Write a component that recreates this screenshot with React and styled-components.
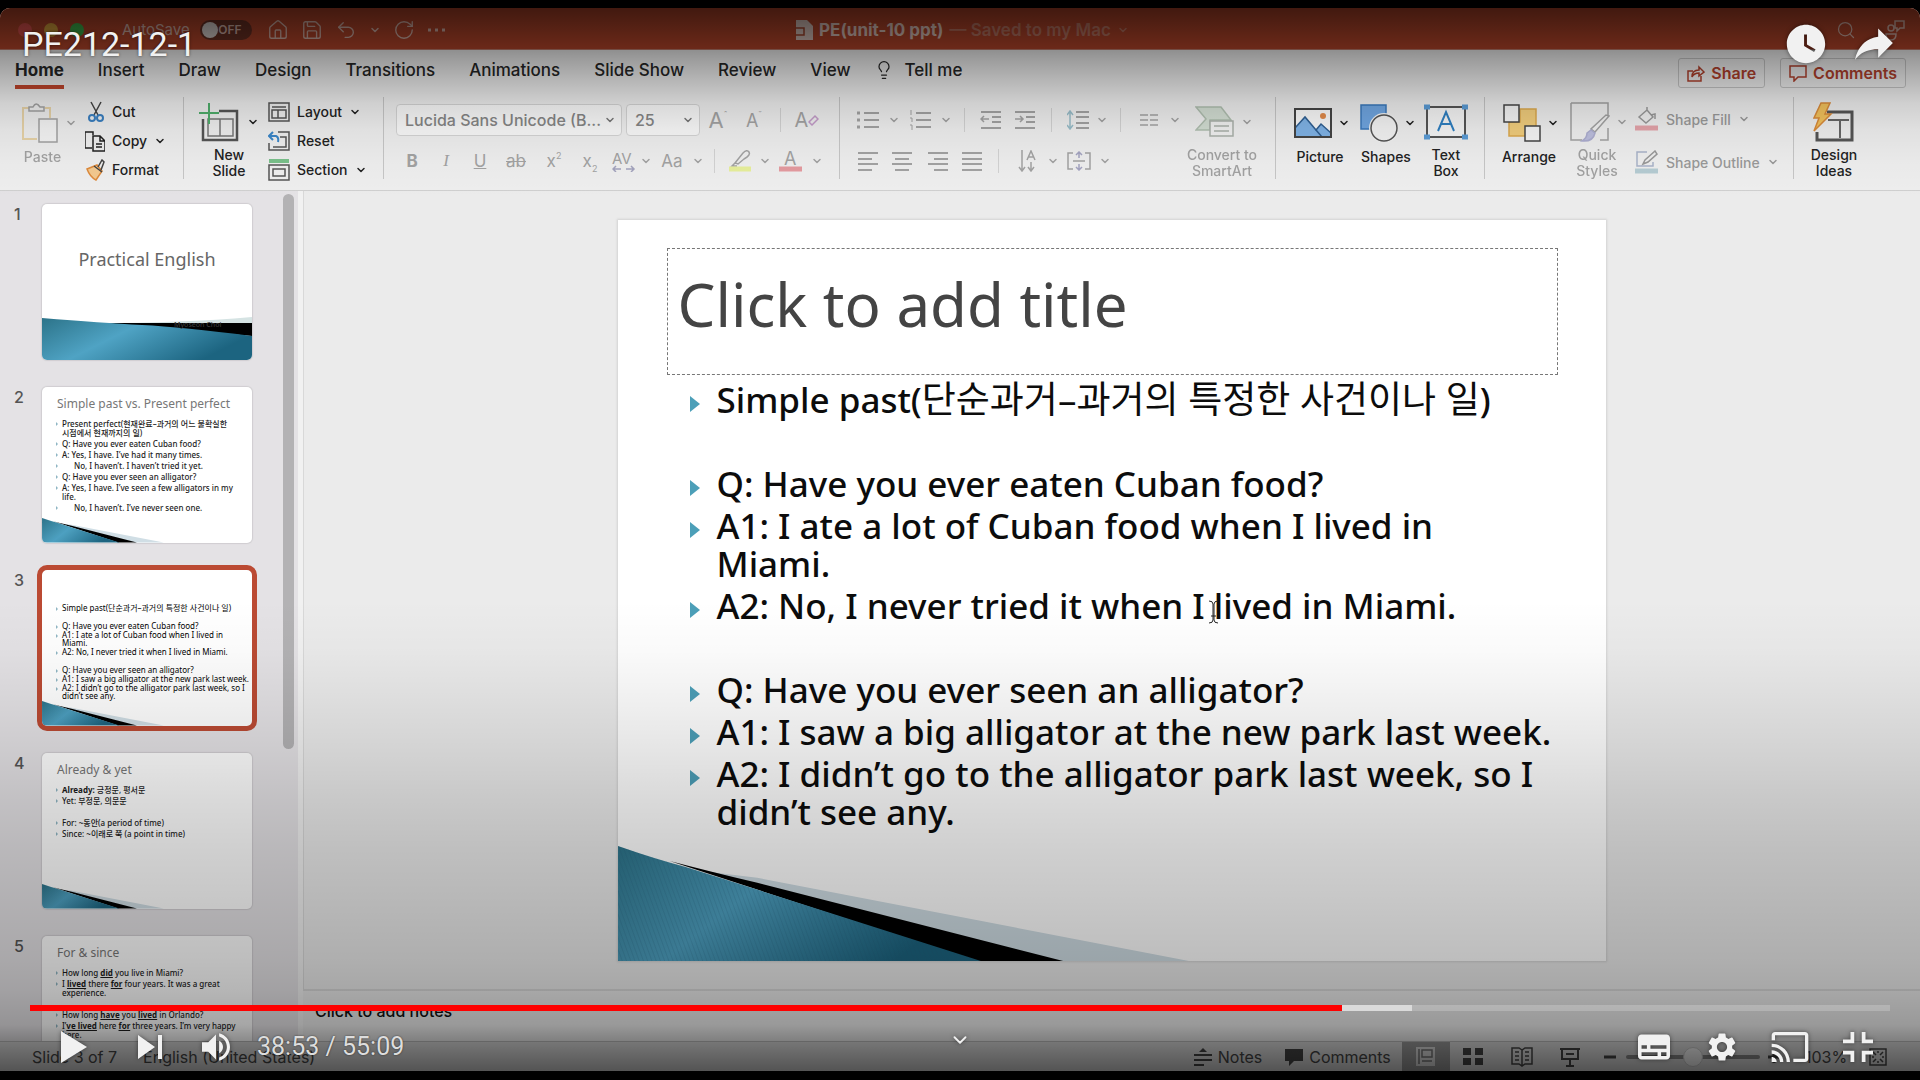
import React, { useState } from "react";
import styled, { createGlobalStyle, css } from "styled-components";
import { ChevronDown, House, Save, Undo2, RotateCw, Search, Lightbulb } from "lucide-react";
import { MdSettings, MdCast, MdWatchLater } from "react-icons/md";

const UI = `Inter, "Liberation Sans", sans-serif`;
const SLIDE = `"Noto Sans", "Noto Sans CJK KR", sans-serif`;

const Global = createGlobalStyle`
  * { box-sizing: border-box; }
  body { margin: 0; background: #000; font-family: ${UI}; overflow: hidden; }
  button, select, input { font: inherit; color: inherit; margin: 0; }
  button { background: none; border: 0; padding: 0; cursor: pointer; }
  p, h1, h2, ul, ol { margin: 0; padding: 0; font-weight: 400; list-style: none; }
  svg { display: block; flex: none; }
`;

/* ---------- frame ---------- */
const Player = styled.div`
  height: 100vh;
  padding: 8px 0 9px;
  background: #000;
  display: grid;
`;
const Video = styled.div`
  position: relative;
  min-height: 0;
  display: grid;
  background: #555;
  border-radius: 10px 10px 0 0;
  overflow: hidden;
`;
const Win = styled.div`
  min-height: 0;
  display: grid;
  grid-template-rows: 42px 141px minmax(0, 1fr) 30px;
  background: #ededed;
`;

/* ---------- title bar ---------- */
const TitleBar = styled.header`
  display: grid;
  grid-template-columns: 1fr auto 1fr;
  align-items: center;
  background: #b5452a;
  color: #d9b4aa;
  font-size: 15px;
  line-height: 20px;
  padding: 2px 14px 0 18px;
  border-bottom: 1px solid #c08070;
`;
const BarSide = styled.div`
  display: flex;
  align-items: center;
  justify-content: ${(p) => (p.$end ? "flex-end" : "flex-start")};
  gap: ${(p) => (p.$end ? 28 : 12)}px;
`;
const Light = styled.span`
  width: 14px;
  height: 14px;
  border-radius: 50%;
  background: ${(p) => p.$c};
`;
const SwitchLabel = styled.label`
  display: flex;
  align-items: center;
  gap: 10px;
  margin: 0 3px 0 26px;
`;
const Switch = styled.span`
  position: relative;
  width: 52px;
  height: 20px;
  border-radius: 10px;
  background: #6b3023;
  display: flex;
  align-items: center;
  justify-content: space-between;
  padding: 0 10px 0 2px;
  font-size: 12px;
  font-weight: 600;
  input { position: absolute; inset: 0; opacity: 0; }
  i { width: 16px; height: 16px; border-radius: 50%; background: #ded5d2; }
`;
const DocTitle = styled.div`
  display: flex;
  align-items: center;
  gap: 6px;
  font-size: 17px;
  font-weight: 600;
  color: #c07865;
  strong { font-weight: 700; color: #e3c8c0; }
`;

/* ---------- ribbon ---------- */
const Ribbon = styled.div`
  display: grid;
  grid-template-rows: 43px 1fr;
  background: #eeeeee;
  border-bottom: 1px solid #cfcfcf;
`;
const TabBar = styled.div`
  display: flex;
  align-items: center;
  padding: 0 14px 4px 15px;
  gap: 24px;
`;
const Tabs = styled.nav`
  display: flex;
  gap: 34px;
`;
const Tab = styled.button`
  height: 39px;
  font-size: 17px;
  line-height: 20px;
  font-weight: ${(p) => (p.$on ? 700 : 500)};
  color: #262626;
  border-top: 4px solid transparent;
  border-bottom: 4px solid ${(p) => (p.$on ? "#c0452c" : "transparent")};
  display: flex;
  align-items: center;
  gap: 10px;
`;
const TabActions = styled.div`
  margin-left: auto;
  display: flex;
  gap: 15px;
`;
const Action = styled.button`
  height: 30px;
  margin-top: 7px;
  padding: 0 8px;
  display: flex;
  align-items: center;
  gap: 6px;
  border: 1px solid #c4c4c4;
  border-radius: 3px;
  font-size: 16px;
  font-weight: 600;
  color: #b0402c;
`;
const Groups = styled.div`
  display: flex;
  padding-top: 4px;
`;
const Group = styled.section`
  width: ${(p) => p.$w}px;
  height: 82px;
  padding-left: ${(p) => p.$pl || 0}px;
  border-right: 1px solid #c6c6c6;
  display: flex;
  &:last-child { border-right: 0; }
`;
const Big = styled.button`
  width: ${(p) => p.$w}px;
  flex: none;
  display: flex;
  flex-direction: column;
  align-items: center;
  font-size: 14px;
  line-height: 16px;
  font-weight: 500;
  color: ${(p) => (p.$off ? "#999" : "#222")};
  opacity: ${(p) => (p.$off ? 0.9 : 1)};
`;
const BigTop = styled.span`
  height: 52px;
  display: flex;
  align-items: center;
  gap: 6px;
  padding-left: ${(p) => (p.$pl ?? 4)}px;
`;
const Stack = styled.div`
  display: flex;
  flex-direction: column;
  gap: ${(p) => (p.$two ? 15 : 0)}px;
  padding: ${(p) => (p.$two ? "8px 0 0 4px" : "0")};
`;
const Small = styled.button`
  height: ${(p) => (p.$off ? 28 : 29)}px;
  flex: none;
  display: flex;
  align-items: center;
  gap: 7px;
  font-size: 14px;
  font-weight: 500;
  color: ${(p) => (p.$off ? "#999" : "#222")};
`;
const Rows = styled.div`
  flex: 1;
  min-width: 0;
  display: grid;
  grid-template-columns: minmax(0, 1fr);
  grid-template-rows: 46px 36px;
`;
const Row = styled.div`
  display: flex;
  align-items: center;
  color: #a6a6a6;
`;
const Tool = styled.button`
  width: ${(p) => p.$w || 36}px;
  height: 28px;
  flex: none;
  display: flex;
  align-items: center;
  justify-content: center;
  font-size: ${(p) => p.$fs || 17}px;
  color: #a2a2a2;
  sup, sub { font-size: 9px; line-height: 0; }
  sup { align-self: flex-start; padding-top: 9px; }
  sub { align-self: flex-end; padding-bottom: 6px; }
  i { font-family: "Liberation Serif", serif; }
`;
const Sep = styled.span`
  width: 1px;
  height: 24px;
  flex: none;
  margin: 0 ${(p) => p.$m}px;
  background: #d2d2d2;
`;
const PickWrap = styled.label`
  position: relative;
  width: ${(p) => p.$w}px;
  height: 32px;
  margin-right: ${(p) => p.$mr || 0}px;
  svg { position: absolute; right: 6px; top: 10px; pointer-events: none; color: #777; }
`;
const Pick = styled.select`
  appearance: none;
  width: 100%;
  height: 100%;
  padding: 0 20px 0 8px;
  border: 1px solid #d4d4d4;
  border-radius: 4px;
  background: #f8f8f8;
  color: #858585;
  font-size: 16px;
  font-weight: 500;
`;

/* ---------- work area ---------- */
const Work = styled.main`
  min-height: 0;
  display: grid;
  grid-template-columns: 303px minmax(0, 1fr);
`;
const Rail = styled.aside`
  min-height: 0;
  overflow: hidden;
  display: grid;
  grid-template-columns: 1fr 11px;
  background: #e4e2e5;
  border-right: 5px solid #f1f1f1;
  padding-right: 4px;
`;
const Scroll = styled.div`
  height: 555px;
  margin-top: 3px;
  border-radius: 6px;
  background: #b3b2b4;
`;
const ThumbList = styled.ol`
  padding: 13px 0 0 14px;
  min-height: 0;
  display: flex;
  flex-direction: column;
  gap: 27px;
`;
const ThumbItem = styled.li`
  display: grid;
  grid-template-columns: 28px 210px;
  font-size: 16px;
  line-height: 20px;
  font-weight: 500;
  color: #555;
`;
const Thumb = styled.div`
  height: 156px;
  position: relative;
  overflow: hidden;
  display: flex;
  flex-direction: column;
  background: #fff;
  border-radius: 5px;
  font-family: ${SLIDE};
  color: #1c1c1c;
  white-space: nowrap;
  padding: 10px 0 0 15px;
  box-shadow: 0 0 1px 1px #d0ced1;
  ${(p) => p.$on && css`outline: 5px solid #bb4a33; box-shadow: none;`}
`;
const ThumbTitle = styled.h2`
  font-size: 12px;
  line-height: 14px;
  color: #777;
  margin-bottom: 8px;
  ${(p) => p.$cover && css`font-size: 18px; line-height: 24px; text-align: center; padding: 33px 15px 0 0; color: #666;`}
`;
const ThumbText = styled.ul`
  font-size: 8px;
  font-weight: ${(p) => (p.$dense ? 400 : 500)};
  line-height: ${(p) => (p.$dense ? 8 : 9)}px;
  padding-top: ${(p) => (p.$dense ? 24 : 0)}px;
  color: ${(p) => (p.$dense ? "#000" : "inherit")};
  li { padding-left: 5px; margin-bottom: ${(p) => (p.$dense ? 1 : 2)}px; min-height: ${(p) => (p.$dense ? 8 : 9)}px; }
  b, u { font-weight: 700; }
`;
const Mark = styled.li`
  position: relative;
  &::before {
    content: "";
    position: absolute;
    left: -1px;
    top: 3px;
    border: 2px solid transparent;
    border-left-color: ${(p) => (p.$blank ? "transparent" : "#8fb6c4")};
  }
`;
const Deco = styled.svg`
  position: absolute;
  left: 0;
  bottom: 0;
  width: ${(p) => p.$w};
`;
const Main = styled.div`
  min-height: 0;
  display: grid;
  grid-template-rows: minmax(0, 1fr) 52px;
`;
const Canvas = styled.div`
  padding-top: 29px;
  display: flex;
  justify-content: center;
  align-items: flex-start;
  background: #ebebeb;
  box-shadow: inset 1px 0 #d8d8d8;
`;
const Slide = styled.article`
  position: relative;
  width: 100%;
  max-width: 988px;
  aspect-ratio: 4 / 3;
  background: #fff;
  box-shadow: 0 0 2px 1px #d2d2d2;
  padding: 28px 48px 0 49px;
  font-family: ${SLIDE};
`;
const SlideTitle = styled.h1`
  position: relative;
  z-index: 1;
  height: 127px;
  padding: 14px 10px;
  border: 1px dashed #777;
  font-size: 60px;
  line-height: 82px;
  color: #444;
`;
const Ko = styled.span``;
const Body = styled.ul`
  position: relative;
  z-index: 1;
  padding: 6px 0 0 50px;
  font-size: 35px;
  line-height: 38px;
  font-weight: 500;
  color: #0c0c0c;
  white-space: nowrap;
  ${Ko} { font-size: 37px; line-height: 0; font-weight: 400; }
`;
const Point = styled.li`
  position: relative;
  min-height: 38px;
  margin-bottom: 4px;
  svg { position: absolute; left: -27px; top: 15px; }
`;
const Beam = styled.svg`
  position: absolute;
  z-index: 2;
  left: 590px;
  top: 380px;
`;
const NotesPane = styled.div`
  border-top: 2px solid #d8d8d8;
  background: #ebebeb;
  padding: 10px 12px;
  font-size: 16px;
  line-height: 20px;
  font-weight: 500;
  color: #111;
`;

/* ---------- status bar ---------- */
const Status = styled.footer`
  display: flex;
  align-items: center;
  justify-content: space-between;
  background: #dcdcdc;
  border-top: 1px solid #bbb;
  padding: 0 28px 0 32px;
  font-size: 16px;
  color: #454545;
`;
const StatusSide = styled.div`
  display: flex;
  align-items: center;
  height: 100%;
  gap: ${(p) => p.$gap || 0}px;
`;
const View = styled.button`
  width: ${(p) => p.$w || 48}px;
  height: 100%;
  display: flex;
  align-items: center;
  justify-content: center;
  gap: 6px;
  color: ${(p) => (p.$on ? "#ddd" : "#454545")};
  background: ${(p) => (p.$on ? "#9a9a9a" : "none")};
`;
const Zoom = styled.input`
  appearance: none;
  width: 134px;
  height: 4px;
  border-radius: 2px;
  background: #888;
  &::-webkit-slider-thumb {
    appearance: none;
    width: 20px;
    height: 20px;
    border-radius: 50%;
    background: #f4f4f4;
    border: 1px solid #c8c8c8;
  }
`;
const Percent = styled.span`
  width: 76px;
  text-align: center;
`;

/* ---------- player overlay ---------- */
const Overlay = styled.div`
  position: absolute;
  inset: 0;
  z-index: 5;
  display: flex;
  flex-direction: column;
  font-family: Roboto, sans-serif;
  color: #f1f1f1;
  background:
    linear-gradient(to bottom, rgba(0,0,0,.64) 0, rgba(0,0,0,.41) 40px, rgba(0,0,0,.34) 52px, rgba(0,0,0,.24) 72px,
      rgba(0,0,0,.13) 95px, rgba(0,0,0,.06) 122px, rgba(0,0,0,.02) 155px, rgba(0,0,0,0) 190px),
    linear-gradient(to top, rgba(0,0,0,.62) 0, rgba(0,0,0,.46) 30px, rgba(0,0,0,.35) 46px, rgba(0,0,0,.29) 80px, rgba(0,0,0,.26) 110px,
      rgba(0,0,0,.22) 171px, rgba(0,0,0,.19) 221px, rgba(0,0,0,.15) 271px, rgba(0,0,0,.1) 321px,
      rgba(0,0,0,.06) 371px, rgba(0,0,0,.02) 421px, rgba(0,0,0,0) 471px);
  svg { filter: drop-shadow(0 0 2px rgba(0,0,0,.5)); }
`;
const TopRow = styled.div`
  height: 72px;
  padding: 0 26px 0 22px;
  display: flex;
  align-items: center;
  justify-content: space-between;
  font-size: 34px;
  text-shadow: 0 0 3px rgba(0,0,0,.6);
`;
const TopButtons = styled.div`
  display: flex;
  align-items: center;
  gap: 25px;
`;
const Seek = styled.input`
  appearance: none;
  display: block;
  width: auto;
  height: 6px;
  margin: auto 30px 11px;
  background: linear-gradient(to right, #f00 ${(p) => p.$played}%, #dadada ${(p) => p.$played}% ${(p) => p.$loaded}%, rgba(255,255,255,.2) ${(p) => p.$loaded}%);
  &::-webkit-slider-thumb { appearance: none; width: 1px; height: 6px; background: #f00; }
`;
const Controls = styled.div`
  display: grid;
  grid-template-columns: 1fr auto 1fr;
  align-items: center;
  height: 50px;
  margin-bottom: -1px;
  padding: 0 28px;
`;
const Cluster = styled.div`
  display: flex;
  align-items: center;
  padding-left: ${(p) => (p.$end ? 0 : 12)}px;
  justify-content: ${(p) => (p.$end ? "flex-end" : "flex-start")};
`;
const Ctl = styled.button`
  width: ${(p) => p.$w || 68}px;
  height: 48px;
  display: flex;
  align-items: center;
  justify-content: center;
`;
const MoreCtl = styled(Ctl)`
  height: 36px;
  align-self: start;
`;
const Time = styled.span`
  margin-left: 17px;
  font-size: 25px;
  line-height: 30px;
  color: #ddd;
  text-shadow: 0 0 2px rgba(0,0,0,.6);
`;

/* ---------- drawings ---------- */
const Chev = () => <ChevronDown size={12} strokeWidth={3} aria-hidden="true" />;
const Ico = ({ w = 22, h = 22, vb, children, ...r }) => (
  <svg width={w} height={h} viewBox={vb || `0 0 ${w} ${h}`} fill="none" stroke="currentColor" strokeWidth="1.5" aria-hidden="true" {...r}>{children}</svg>
);
const Wave = () => (
  <Deco $w="58%" viewBox="0 0 576 116" aria-hidden="true">
    <defs>
      <linearGradient id="sea" x1="0" y1="0" x2="1" y2="0.4">
        <stop offset="0" stopColor="#2c7389" /><stop offset=".45" stopColor="#4fa3c4" /><stop offset="1" stopColor="#1c6480" />
      </linearGradient>
      <pattern id="weave" width="4" height="4" patternUnits="userSpaceOnUse" patternTransform="rotate(-20)">
        <path d="M0 0V4" stroke="#1f5c74" strokeWidth="1" opacity=".35" />
      </pattern>
    </defs>
    <path d="M90 26 140 32 576 116H440z" fill="#d0dee5" />
    <path d="M52 15Q90 25 140 37L449 116H360z" fill="#000" />
    <path d="M0 0Q40 14 68 21L366 116H0z" fill="url(#sea)" />
    <path d="M0 0Q40 14 68 21L366 116H0z" fill="url(#weave)" />
  </Deco>
);
const CoverWave = () => (
  <Deco $w="100%" viewBox="0 0 210 43" aria-hidden="true">
    <path d="M50 6Q140 6 210 0V10H60z" fill="#d5e3e3" />
    <path d="M62 6H210V19Z" fill="#000" />
    <path d="M0 1Q60 6 100 8T210 19V43H0z" fill="url(#sea)" />
    <text x="132" y="10" fontSize="7" fill="#3a3a3a" fontFamily="Noto Sans">Myoseon Choi</text>
  </Deco>
);
const Bars = ({ d, children }) => (
  <Ico w={22} h={20}><path d={d} strokeWidth="2" />{children}</Ico>
);
const A_LEFT = "M1 2H21M1 8H15M1 13H21M1 19H15";
const A_MID = "M1 2H21M4 8H18M1 13H21M4 19H18";
const A_RIGHT = "M1 2H21M7 8H21M1 13H21M7 19H21";
const A_FULL = "M1 2H21M1 8H21M1 13H21M1 19H21";

const lines = [
  <>Simple past(<Ko>단순과거–과거의 특정한 사건이나 일</Ko>)</>, null,
  <>Q: Have you ever eaten Cuban food?</>,
  <>A1: I ate a lot of Cuban food when I lived in<br />Miami.</>,
  <>A2: No, I never tried it when I lived in Miami.</>, null,
  <>Q: Have you ever seen an alligator?</>,
  <>A1: I saw a big alligator at the new park last week.</>,
  <>A2: I didn’t go to the alligator park last week, so I<br />didn’t see any.</>,
];
const slides = [
  { cover: "Practical English" },
  { title: "Simple past vs. Present perfect", text: [
    <>Present perfect(현재완료–과거의 어느 불확실한<br />시점에서 현재까지의 일)</>, "Q: Have you ever eaten Cuban food?", "A: Yes, I have. I’ve had it many times.",
    <>&emsp;&ensp;No, I haven’t. I haven’t tried it yet.</>, "Q: Have you ever seen an alligator?",
    <>A: Yes, I have. I’ve seen a few alligators in my<br />life.</>, <>&emsp;&ensp;No, I haven’t. I’ve never seen one.</> ] },
  { text: lines, dense: true },
  { title: "Already & yet", text: [<><b>Already:</b> 긍정문, 평서문</>, "Yet: 부정문, 의문문", null, "For: ~동안(a period of time)", "Since: ~이래로 쭉 (a point in time)"] },
  { title: "For & since", text: [<>How long <u>did</u> you live in Miami?</>, <>I <u>lived</u> there <u>for</u> four years. It was a great<br />experience.</>, null,
    <>How long <u>have</u> you <u>lived</u> in Orlando?</>, <>I’<u>ve lived</u> here <u>for</u> three years. I’m very happy<br />here.</>] },
];

function Thumbs() {
  return (
    <ThumbList>
      {slides.map((s, i) => (
        <ThumbItem key={i}>
          <span>{i + 1}</span>
          <Thumb $on={i === 2}>
            {s.cover && <ThumbTitle $cover>{s.cover}</ThumbTitle>}
            {s.title && <ThumbTitle>{s.title}</ThumbTitle>}
            {s.text && <ThumbText $dense={s.dense}>{s.text.map((t, k) => <Mark key={k} $blank={!t}>{t}</Mark>)}</ThumbText>}
            {s.cover ? <CoverWave /> : <Wave />}
          </Thumb>
        </ThumbItem>
      ))}
    </ThumbList>
  );
}

function RibbonGroups() {
  return (
    <Groups>
      <Group $w={184}>
        <Big $w={85} $off>
          <BigTop $pl={12}>
            <Ico w={38} h={42}><path d="M8 6H2V37H16M24 6H29V16" stroke="#e6cfa0" strokeWidth="2" /><path d="M8 9V5H12Q15-1 19 5H23V9z" stroke="#999" /><path d="M18 17H36V40H18z" fill="#f4f4f4" stroke="#999" /></Ico>
            <Chev />
          </BigTop>
          Paste
        </Big>
        <Stack>
          <Small><Ico w={20} h={22}><path d="M6 1 13 14M16 1 9 14" stroke="#444" /><circle cx="7" cy="17" r="3" stroke="#3a7fc0" strokeWidth="2" /><circle cx="15" cy="17" r="3" stroke="#3a7fc0" strokeWidth="2" /></Ico>Cut</Small>
          <Small><Ico w={20} h={22} vb="1 0 20 22"><path d="M8 18H1V2H9V5" /><path d="M9 6H16L21 11V21H9zM16 6V11H21M12 14H18M12 17H18" /></Ico>Copy <Chev /></Small>
          <Small><Ico w={20} h={22}><path d="M2 10 12 6 17 12 11 21Q5 18 2 10z" fill="#f3c98f" stroke="#dd8a3c" /><path d="M9 7 17 13M13 8 17 1 19 3 16 11" stroke="#444" /></Ico>Format</Small>
        </Stack>
      </Group>
      <Group $w={200} $pl={6}>
        <Big $w={78}>
          <BigTop $pl={0}>
            <Ico w={42} h={40}><path d="M20 9H38V38H4V17" stroke="#555" strokeWidth="2.5" /><path d="M9 17H34V34H9zM21 17V34" stroke="#777" /><path d="M10 1V22M0 11H20" stroke="#4fae6b" strokeWidth="2" /></Ico>
            <Chev />
          </BigTop>
          New<br />Slide
        </Big>
        <Stack>
          <Small><Ico w={22} h={20}><path d="M1 1H21V19H1zM4 5H18M4 8H18V16H4zM10 8V16" stroke="#555" /></Ico>Layout <Chev /></Small>
          <Small><Ico w={22} h={20}><path d="M10 1H21V19H1V12M5 16H18V6H12" stroke="#555" /><path d="M1 5H8Q11 6 10 11M5 1 1 5 5 9" stroke="#3a86c8" strokeWidth="2" /></Ico>Reset</Small>
          <Small><Ico w={22} h={22}><path d="M1 2H21" stroke="#79c08a" strokeWidth="4" /><path d="M1 6H21V21H1zM5 10H17V17H5z" stroke="#555" /></Ico>Section <Chev /></Small>
        </Stack>
      </Group>
      <Group $w={456} $pl={12}>
        <Rows>
          <Row>
            <PickWrap $w={226} $mr={4}><Pick aria-label="Font"><option>Lucida Sans Unicode (B...</option></Pick><Chev /></PickWrap>
            <PickWrap $w={74}><Pick aria-label="Font size"><option>25</option></Pick><Chev /></PickWrap>
            <Tool $w={36} $fs={22} aria-label="Grow font">A<sup>ˆ</sup></Tool>
            <Tool $w={36} $fs={18} aria-label="Shrink font">A<sup>ˇ</sup></Tool>
            <Sep $m={8} />
            <Tool $w={36} $fs={20} aria-label="Clear formatting">A<Ico w={11} h={12}><path d="M1 8 7 2 10 5 4 11z" stroke="#c39bc8" /></Ico></Tool>
          </Row>
          <Row>
            <Tool $w={32}><b>B</b></Tool>
            <Tool><i>I</i></Tool>
            <Tool $w={32}><u>U</u></Tool>
            <Tool $w={40}><s>ab</s></Tool>
            <Tool>x<sup>2</sup></Tool>
            <Tool>x<sub>2</sub></Tool>
            <Tool $w={32} aria-label="Character spacing"><Ico w={24} h={22}><text x="0" y="14" fontSize="15" fill="currentColor" stroke="none">AV</text><path d="M1 19H9M4 16 1 19 4 22M14 19H22M19 16 22 19 19 22" stroke="#a3a3bd" /></Ico></Tool>
            <Tool $w={12}><Chev /></Tool>
            <Tool $w={40}>Aa</Tool>
            <Tool $w={12}><Chev /></Tool>
            <Sep $m={10} />
            <Tool $w={32} aria-label="Highlight"><Ico w={24} h={24}><path d="M6 14 14 4Q18 0 20 3T15 10L9 15zM6 14 3 17H8" /><path d="M0 20H22" stroke="#e6ee9a" strokeWidth="5" /></Ico></Tool>
            <Tool $w={16}><Chev /></Tool>
            <Tool $w={36} aria-label="Font colour"><Ico w={24} h={24}><text x="5" y="16" fontSize="18" fill="currentColor" stroke="none">A</text><path d="M0 20H23" stroke="#e39a9f" strokeWidth="5" /></Ico></Tool>
            <Tool $w={16}><Chev /></Tool>
          </Row>
        </Rows>
      </Group>
      <Group $w={436} $pl={12}>
        <Rows>
          <Row>
            <Tool $w={32} aria-label="Bullets"><Bars d="M7 3H22M7 10H22M7 17H22"><path d="M0 3H3M0 10H3M0 17H3" strokeWidth="3" /></Bars></Tool>
            <Tool $w={20}><Chev /></Tool>
            <Tool $w={32} aria-label="Numbering"><Bars d="M7 3H22M7 10H22M7 17H22"><path d="M2 0V5M1 8H3V12M1 15H3V20" strokeWidth="1" /></Bars></Tool>
            <Tool $w={20}><Chev /></Tool>
            <Sep $m={8} />
            <Tool $w={36} aria-label="Outdent"><Bars d="M1 2H21M12 7H21M12 12H21M1 18H21"><path d="M9 9H1M4 6 1 9 4 12" /></Bars></Tool>
            <Tool $w={32} aria-label="Indent"><Bars d="M1 2H21M12 7H21M12 12H21M1 18H21"><path d="M1 9H9M6 6 9 9 6 12" /></Bars></Tool>
            <Sep $m={10} />
            <Tool $w={32} aria-label="Line spacing"><Bars d="M9 2H22M9 7H22M9 13H22M9 18H22"><path d="M3 1V19M0 5 3 1 6 5M0 15 3 19 6 15" stroke="#98bcc8" /></Bars></Tool>
            <Tool $w={16}><Chev /></Tool>
            <Sep $m={10} />
            <Tool $w={36} aria-label="Columns"><Ico w={18} h={12}><path d="M0 1H8M0 6H8M0 11H8M10 1H18M10 6H18M10 11H18" /></Ico></Tool>
            <Tool $w={16}><Chev /></Tool>
          </Row>
          <Row>
            <Tool $w={32} aria-label="Align left"><Bars d={A_LEFT} /></Tool>
            <Tool aria-label="Centre"><Bars d={A_MID} /></Tool>
            <Tool aria-label="Align right"><Bars d={A_RIGHT} /></Tool>
            <Tool $w={32} aria-label="Justify"><Bars d={A_FULL} /></Tool>
            <Sep $m={10} />
            <Tool $w={36} aria-label="Text direction"><Ico w={18} h={22}><path d="M4 0V20M1 17 4 21 7 17M13 12V20M10 17 13 21 16 17M9 10 13 1 17 10M10 7H16" /></Ico></Tool>
            <Tool $w={16}><Chev /></Tool>
            <Tool $w={36} aria-label="Align text"><Ico w={24} h={20}><path d="M6 2H1V18H6M18 2H23V18H18M6 10H18" /><path d="M12 1V7M9 4 12 1 15 4M12 13V19M9 16 12 19 15 16" stroke="#a3a3c0" /></Ico></Tool>
            <Tool $w={16}><Chev /></Tool>
          </Row>
        </Rows>
        <Big $w={106} $off>
          <BigTop>
            <Ico w={40} h={32}><path d="M1 1H26L36 14H15V24H1L11 13z" fill="#cfdccf" stroke="#a9b9a9" /><path d="M15 15H38V30H15zM19 20H34M19 25H34" fill="#f1f1f1" stroke="#a3aba3" /></Ico>
            <Chev />
          </BigTop>
          Convert to<br />SmartArt
        </Big>
      </Group>
      <Group $w={209} $pl={10}>
        <Big $w={68}>
          <BigTop>
            <Ico w={38} h={30}><path d="M1 1H37V29H1z" fill="#f8f8f8" stroke="none" /><path d="M1 20 11 9 22 22 27 16 37 25V29H1z" fill="#7fb2e5" stroke="#2f5f92" /><path d="M22 22 28 29" stroke="#2f5f92" /><path d="M1 1H37V29H1z" stroke="#444" strokeWidth="2" /><circle cx="29" cy="8" r="3" fill="#e08a4a" stroke="none" /></Ico>
            <Chev />
          </BigTop>
          Picture
        </Big>
        <Big $w={64}>
          <BigTop>
            <Ico w={38} h={38}><path d="M1 1H26V25H1z" fill="#6fa5e0" stroke="#3a78bb" /><circle cx="24" cy="24" r="13" fill="#f2f2f2" stroke="#f2f2f2" strokeWidth="4" /><circle cx="24" cy="24" r="13" fill="#f2f2f2" stroke="#555" /></Ico>
            <Chev />
          </BigTop>
          Shapes
        </Big>
        <Big $w={56}>
          <BigTop $pl={0}>
            <Ico w={44} h={36}><path d="M3 3H41V33H3z" fill="#f4f4f4" stroke="#555" strokeWidth="2" /><path d="M14 27 22 8 30 27M17 20H27" stroke="#2f7fc0" strokeWidth="2" /><path d="M0 3H6M38 3H44M0 33H6M38 33H44" stroke="#5a9bd5" strokeWidth="5" /></Ico>
          </BigTop>
          Text<br />Box
        </Big>
      </Group>
      <Group $w={309} $pl={10}>
        <Big $w={68}>
          <BigTop>
            <Ico w={38} h={38}><path d="M17 5H33V32H6V18H17z" fill="#f0cc7c" stroke="#dba94e" /><path d="M1 1H16V18H1zM22 22H37V37H22z" fill="#f4f4f4" stroke="#444" /></Ico>
            <Chev />
          </BigTop>
          Arrange
        </Big>
        <Big $w={68} $off>
          <BigTop>
            <Ico w={40} h={40}><path d="M1 1H38V14M1 1V38H12M38 26V38H30" /><path d="M39 14 25 30 21 27 36 13z" fill="#f2f2f2" /><path d="M21 28 25 31Q23 40 12 39 17 36 17 31z" fill="#b7b9dc" stroke="#a5a7cc" /></Ico>
            <Chev />
          </BigTop>
          Quick<br />Styles
        </Big>
        <Stack $two>
          <Small $off><Ico w={24} h={24}><path d="M4 10 12 3 18 10 11 16zM12 3V0M20 12V7L16 8" /><path d="M0 21H23" stroke="#e3a3a9" strokeWidth="5" /></Ico>Shape Fill <Chev /></Small>
          <Small $off><Ico w={24} h={24}><path d="M12 2H2V16H18V12" stroke="#a9b3c9" /><path d="M20 1 10 10 8 14 13 12 22 4z" /><path d="M0 21H23" stroke="#b5cbd2" strokeWidth="5" /></Ico>Shape Outline <Chev /></Small>
        </Stack>
      </Group>
      <Group $w={90}>
        <Big $w={80}>
          <BigTop $pl={0}>
            <Ico w={42} h={40}><path d="M14 10H39V38H4V30" stroke="#555" strokeWidth="3" /><path d="M15 18H36M27 18V36" stroke="#666" strokeWidth="2" /><path d="M8 1H17L12 12H18L1 29 6 16H1z" fill="#f3c25c" stroke="#d98b3a" /></Ico>
          </BigTop>
          Design<br />Ideas
        </Big>
      </Group>
    </Groups>
  );
}

export default function App() {
  const [seek, setSeek] = useState(2333);
  const [zoom, setZoom] = useState(50);
  const played = (seek / 3309) * 100;
  return (
    <Player>
      <Global />
      <Video>
        <Win>
          <TitleBar>
            <BarSide>
              <Light $c="#e0524e" /><Light $c="#d9a13c" /><Light $c="#3fb54c" />
              <SwitchLabel>AutoSave<Switch><input type="checkbox" /><i />OFF</Switch></SwitchLabel>
              <House size={22} strokeWidth={1.5} /><Save size={22} strokeWidth={1.5} />
              <Undo2 size={22} strokeWidth={1.5} /><Chev /><RotateCw size={22} strokeWidth={1.5} />
              <Ico w={20} h={4}><path d="M1 2H4M8 2H11M15 2H18" strokeWidth="3" /></Ico>
            </BarSide>
            <DocTitle>
              <Ico w={18} h={20}><path d="M1 0H12L18 6V20H1z" fill="#dcc5be" stroke="none" /><path d="M0 8H9V15H0" stroke="#a5442c" /></Ico>
              <strong>PE(unit-10 ppt)</strong> — Saved to my Mac <Chev />
            </DocTitle>
            <BarSide $end>
              <Search size={20} strokeWidth={1.5} />
              <Ico w={22} h={22}><circle cx="7" cy="9" r="3" /><path d="M2 15H12Q12 21 7 21T2 15zM11 2H20V9H16L13 12V9H11z" /></Ico>
            </BarSide>
          </TitleBar>
          <Ribbon>
            <TabBar>
              <Tabs>
                {["Home", "Insert", "Draw", "Design", "Transitions", "Animations", "Slide Show", "Review", "View"].map((t, i) => (
                  <Tab key={t} $on={i === 0}>{t}</Tab>
                ))}
              </Tabs>
              <Tab><Lightbulb size={20} strokeWidth={1.5} />Tell me</Tab>
              <TabActions>
                <Action><Ico w={18} h={18}><path d="M6 7H1V17H14V12M5 13Q5 6 12 6V3L17 8 12 12V9Q7 9 5 13z" /></Ico>Share</Action>
                <Action><Ico w={18} h={18}><path d="M1 2H17V13H9L5 17V13H1z" /></Ico>Comments</Action>
              </TabActions>
            </TabBar>
            <RibbonGroups />
          </Ribbon>
          <Work>
            <Rail>
              <Thumbs />
              <Scroll />
            </Rail>
            <Main>
              <Canvas>
                <Slide>
                  <SlideTitle>Click to add title</SlideTitle>
                  <Body>
                    {lines.map((l, i) => (
                      <Point key={i}>{l && <svg width="10" height="16" viewBox="0 0 10 16" aria-hidden="true"><path d="M0 0 10 8 0 16z" fill="#4c9fb8" /></svg>}{l}</Point>
                    ))}
                  </Body>
                  <Wave />
                  <Beam width="11" height="24" viewBox="0 0 11 24" fill="none" stroke="#222" aria-hidden="true"><path d="M1 1Q5 1 5 4V20Q5 23 1 23M10 1Q6 1 6 4V20Q6 23 10 23M3 16H8" /></Beam>
                </Slide>
              </Canvas>
              <NotesPane>Click to add notes</NotesPane>
            </Main>
          </Work>
          <Status>
            <StatusSide $gap={26}><span>Slide 3 of 7</span><span>English (United States)</span></StatusSide>
            <StatusSide>
              <View $w={92}><Ico w={18} h={18}><path d="M0 7H18M0 12H18M0 17H10" strokeWidth="2" /><path d="M5 4 9 0 13 4z" fill="currentColor" stroke="none" /></Ico>Notes</View>
              <View $w={128}><Ico w={18} h={18}><path d="M0 1H18V13H9L4 18V13H0z" fill="currentColor" stroke="none" /></Ico>Comments</View>
              <View $on aria-label="Normal view"><Ico w={20} h={20}><path d="M0 0H19V19H0z" fill="currentColor" stroke="none" /><path d="M6 3H16V10H6zM6 14H16M3 2V17" stroke="#777" /></Ico></View>
              <View aria-label="Slide sorter"><Ico w={22} h={18}><path d="M0 0H8V7H0zM12 0H20V7H12zM0 10H8V17H0zM12 10H20V17H12z" fill="currentColor" stroke="none" /></Ico></View>
              <View aria-label="Reading view"><Ico w={22} h={20}><path d="M11 3V19M11 3 8 1H1V17H8L11 19 14 17H21V1H14zM4 5H8M4 9H8M4 13H8M14 5H18M14 9H18M14 13H18" /></Ico></View>
              <View aria-label="Slide show"><Ico w={20} h={20}><path d="M0 2H20M2 2V12H18V2M10 12V18M6 19H14M6 7H14" strokeWidth="2" /></Ico></View>
              <View $w={32} aria-label="Zoom out"><Ico w={12} h={4}><path d="M0 2H12" strokeWidth="3" /></Ico></View>
              <Zoom type="range" aria-label="Zoom" value={zoom} onChange={(e) => setZoom(e.target.value)} />
              <View $w={28} aria-label="Zoom in"><Ico w={12} h={12}><path d="M0 6H12M6 0V12" strokeWidth="3" /></Ico></View>
              <Percent>103%</Percent>
              <View $w={28} aria-label="Fit to window"><Ico w={18} h={18}><path d="M1 1H17V17H1zM4 4 7 7M14 4 11 7M4 14 7 11M14 14 11 11M9 3V5M9 13V15M3 9H5M13 9H15" /></Ico></View>
            </StatusSide>
          </Status>
        </Win>
        <Overlay>
          <TopRow>
            <span>PE212-12-1</span>
            <TopButtons>
              <button aria-label="Watch later"><MdWatchLater size={46} /></button>
              <button aria-label="Share"><svg width="40" height="34" viewBox="7.5 9 21 18" fill="currentColor"><path d="M20.2 14.19V9.74l7.79 7.79-7.79 7.79v-4.56c-3.93-.07-8.1 1.05-10.86 4-.54.37-1.74 2.53-1.22.89.96-4.33 3.68-8.47 7.86-10.27 1.33-.6 2.76-.98 4.22-1.19z" /></svg></button>
            </TopButtons>
          </TopRow>
          <Seek type="range" aria-label="Seek" min="0" max="3309" value={seek} $played={played} $loaded={74.3} onChange={(e) => setSeek(+e.target.value)} />
          <Controls>
            <Cluster>
              <Ctl aria-label="Play"><svg width="26" height="32" viewBox="0 0 13 16" fill="currentColor"><path d="M0 0 13 8 0 16z" /></svg></Ctl>
              <Ctl $w={84} aria-label="Next"><svg width="24" height="24" viewBox="0 0 12 12" fill="currentColor"><path d="M0 0 8.5 6 0 12zM10 0H12V12H10z" /></svg></Ctl>
              <Ctl $w={48} aria-label="Mute"><svg width="28" height="28" viewBox="8 9 18 18" fill="currentColor"><path d="M8 21H12L17 26V10L12 15H8zM19 14V22C20.48 21.32 21.5 19.77 21.5 18S20.48 14.74 19 14zM19 11.29C21.89 12.15 24 14.83 24 18S21.89 23.85 19 24.71V26.77C23.01 25.86 26 22.28 26 18S23.01 10.14 19 9.23z" /></svg></Ctl>
              <Time>38:53 / 55:09</Time>
            </Cluster>
            <MoreCtl $w={28} aria-label="More"><ChevronDown size={22} /></MoreCtl>
            <Cluster $end>
              <Ctl aria-label="Subtitles"><svg width="32" height="26" viewBox="9 11 18 14" fill="currentColor" fillRule="evenodd"><path d="M11 11C9.89 11 9 11.9 9 13V23C9 24.1 9.89 25 11 25H25C26.1 25 27 24.1 27 23V13C27 11.9 26.1 11 25 11zM11 17H14V19H11zM20 23H11V21H20zM25 23H22V21H25zM25 19H16V17H25z" /></svg></Ctl>
              <Ctl aria-label="Settings"><MdSettings size={34} /></Ctl>
              <Ctl aria-label="Cast"><MdCast size={40} /></Ctl>
              <Ctl aria-label="Exit full screen"><svg width="30" height="30" viewBox="10 10 16 16" fill="currentColor"><path d="M14 14H10V16H16V10H14zM22 14V10H20V16H26V14zM20 26H22V22H26V20H20zM10 22H14V26H16V20H10z" /></svg></Ctl>
            </Cluster>
          </Controls>
        </Overlay>
      </Video>
    </Player>
  );
}
